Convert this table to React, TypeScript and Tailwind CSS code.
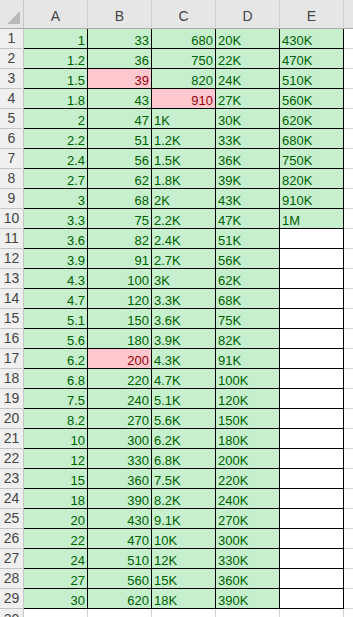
const colA = ["1", "1.2", "1.5", "1.8", "2", "2.2", "2.4", "2.7", "3", "3.3", "3.6", "3.9", "4.3", "4.7", "5.1", "5.6", "6.2", "6.8", "7.5", "8.2", "10", "12", "15", "18", "20", "22", "24", "27", "30"];
const colB = ["33", "36", "39", "43", "47", "51", "56", "62", "68", "75", "82", "91", "100", "120", "150", "180", "200", "220", "240", "270", "300", "330", "360", "390", "430", "470", "510", "560", "620"];
const colC = ["680", "750", "820", "910", "1K", "1.2K", "1.5K", "1.8K", "2K", "2.2K", "2.4K", "2.7K", "3K", "3.3K", "3.6K", "3.9K", "4.3K", "4.7K", "5.1K", "5.6K", "6.2K", "6.8K", "7.5K", "8.2K", "9.1K", "10K", "12K", "15K", "18K"];
const colD = ["20K", "22K", "24K", "27K", "30K", "33K", "36K", "39K", "43K", "47K", "51K", "56K", "62K", "68K", "75K", "82K", "91K", "100K", "120K", "150K", "180K", "200K", "220K", "240K", "270K", "300K", "330K", "360K", "390K"];
const colE = ["430K", "470K", "510K", "560K", "620K", "680K", "750K", "820K", "910K", "1M"];

// cells flagged red: B3, C4, B17
const red = new Set(["B3", "C4", "B17"]);

type CellProps = { value?: string; id: string; right?: boolean };

const Cell = ({ value, id, right }: CellProps) => {
	const empty = value === undefined;
	const isRed = red.has(id);
	const fill = empty ? "bg-white" : isRed ? "bg-[#ffc7ce] text-[#9c0006]" : "bg-[#c6efce] text-[#006100]";
	return (
		<div
			className={`w-[64px] shrink-0 h-full border-r border-black flex items-end pb-[1px] px-[2px] leading-none ${fill} ${right ? "justify-end" : "justify-start"}`}
		>
			{value}
		</div>
	);
};

const isNum = (v: string) => !v.endsWith("K") && !v.endsWith("M");

export default function App() {
	const rows = colA.map((_, i) => i);
	return (
		<div className="w-[353px] h-[617px] overflow-hidden bg-white text-[13px] font-['Liberation_Sans',Arial,sans-serif]">
			<div className="flex h-[29px] bg-[#e6e6e6] border-b border-[#ababab] text-[#444] text-[14px]">
				<div className="w-[24px] shrink-0 border-r border-[#c6c6c6] relative">
					<svg width="14" height="14" className="absolute left-[7px] top-[11px]">
						<polygon points="13,0 13,13 0,13" fill="#b9b9b9" />
					</svg>
				</div>
				{["A", "B", "C", "D", "E"].map((c) => (
					<div key={c} className="w-[64px] shrink-0 border-r border-[#d0d0d0] flex items-center justify-center pt-[4px]">
						{c}
					</div>
				))}
				<div className="flex-1" />
			</div>
			{rows.map((i) => {
				const n = i + 1;
				const e = colE[i];
				return (
					<div key={n} className="flex h-[20px]">
						<div className="w-[24px] shrink-0 bg-[#f0f0f0] border-r border-b border-[#c6c6c6] text-[#444] text-[14px] flex items-center justify-center">
							{n}
						</div>
						<div className="flex h-full border-b border-black">
							<Cell id={`A${n}`} value={colA[i]} right />
							<Cell id={`B${n}`} value={colB[i]} right />
							<Cell id={`C${n}`} value={colC[i]} right={isNum(colC[i])} />
							<Cell id={`D${n}`} value={colD[i]} />
							<Cell id={`E${n}`} value={e} />
						</div>
						<div className="flex-1 border-b border-[#d4d4d4]" />
					</div>
				);
			})}
			<div className="flex h-[20px]">
				<div className="w-[24px] shrink-0 bg-[#f0f0f0] border-r border-[#c6c6c6] text-[#444] text-[14px] flex items-center justify-center">
					30
				</div>
				{[0, 1, 2, 3, 4].map((k) => (
					<div key={k} className="w-[64px] shrink-0 border-r border-[#d4d4d4]" />
				))}
			</div>
		</div>
	);
}
